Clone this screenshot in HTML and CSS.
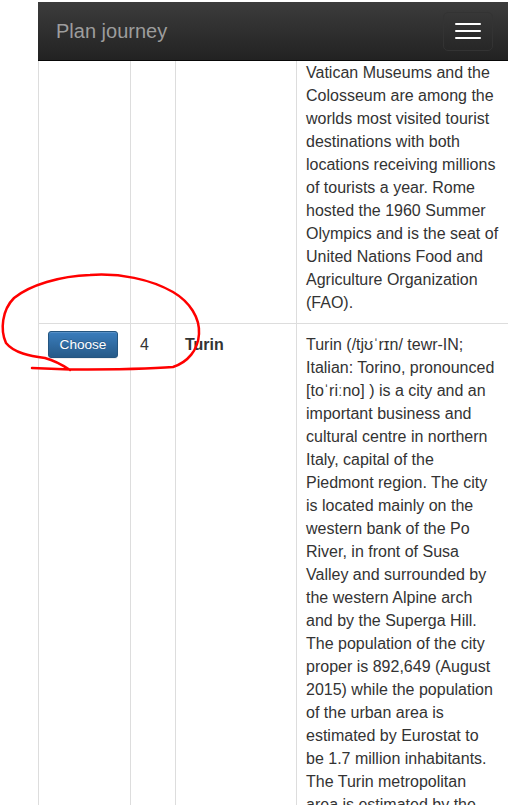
FILE: index.html
```html
<!DOCTYPE html>
<html lang="en">
<head>
<meta charset="utf-8">
<title>Plan journey</title>
<link rel="stylesheet" href="styles.css">
</head>
<body>
<div class="page">
  <nav class="navbar">
    <span class="brand">Plan journey</span>
    <button class="toggle" type="button" aria-label="Toggle navigation">
      <span class="bar"></span>
      <span class="bar"></span>
      <span class="bar"></span>
    </button>
  </nav>
  <main class="content">
    <table class="table">
      <colgroup>
        <col class="col-action">
        <col class="col-num">
        <col class="col-name">
        <col class="col-desc">
      </colgroup>
      <tbody>
        <tr>
          <td></td>
          <td></td>
          <td></td>
          <td>Vatican Museums and the Colosseum are among the worlds most visited tourist destinations with both locations receiving millions of tourists a year. Rome hosted the 1960 Summer Olympics and is the seat of United Nations Food and Agriculture Organization (FAO).</td>
        </tr>
        <tr>
          <td><button class="btn-choose" type="button">Choose</button></td>
          <td>4</td>
          <td class="name">Turin</td>
          <td>Turin (/tjʊˈrɪn/ tewr-IN; Italian: Torino, pronounced [toˈriːno] ) is a city and an important business and cultural centre in northern Italy, capital of the Piedmont region. The city is located mainly on the western bank of the Po River, in front of Susa Valley and surrounded by the western Alpine arch and by the Superga Hill. The population of the city proper is 892,649 (August 2015) while the population of the urban area is estimated by Eurostat to be 1.7 million inhabitants. The Turin metropolitan area is estimated by the OECD to have a population of 2.2 million.</td>
        </tr>
      </tbody>
    </table>
  </main>
  <svg class="annotation" width="508" height="805" viewBox="0 0 508 805" aria-hidden="true">
    <path d="M32,368 L70,369.5 C110,369.5 150,369 173,367 C188,362 198,350 199,334 C200,318 190,302 173,292 C150,279 120,273 90,275 C60,276 30,285 14,298 C2,310 0,330 6,343 C14,353 30,356 45,358 C56,361 64,366 70,370" fill="none" stroke="#ff0000" stroke-width="2.5" stroke-linecap="round" stroke-linejoin="round"/>
  </svg>
</div>
</body>
</html>
```

FILE: styles.css
```css
* {
  box-sizing: border-box;
}

html, body {
  margin: 0;
  background: #fff;
}

body {
  font-family: "Liberation Sans", Arial, sans-serif;
  color: #333;
}

.page {
  position: relative;
  padding-left: 38px;
  padding-top: 51px;
  min-height: 805px;
}

.navbar {
  position: fixed;
  top: 2px;
  left: 38px;
  right: 0;
  height: 59px;
  display: flex;
  align-items: center;
  justify-content: space-between;
  background: linear-gradient(to bottom, #3c3c3c 0%, #222 100%);
  border-bottom: 1px solid #080808;
  z-index: 10;
}

.brand {
  padding-left: 18px;
  font-size: 20px;
  line-height: 20px;
  color: #9d9d9d;
}

.toggle {
  margin-right: 15px;
  width: 50px;
  height: 39px;
  padding: 0;
  border: 1px solid #333;
  border-radius: 5px;
  background: transparent;
  display: flex;
  flex-direction: column;
  align-items: center;
  justify-content: center;
  gap: 5px;
}

.bar {
  display: block;
  width: 26px;
  height: 2px;
  border-radius: 1px;
  background: #fff;
}

.table {
  width: 470px;
  border-collapse: collapse;
  table-layout: fixed;
  font-size: 16px;
  line-height: 23px;
}

.col-action { width: 92px; }
.col-num { width: 45px; }
.col-name { width: 121px; }
.col-desc { width: 212px; }

.table td {
  border: 1px solid #ddd;
  padding: 9px;
  vertical-align: top;
}

.table td:last-child {
  border-right: 0;
}

.name {
  font-weight: bold;
}

.btn-choose {
  display: block;
  margin-top: -2px;
  width: 70px;
  height: 27px;
  padding: 0;
  font-family: "Liberation Sans", Arial, sans-serif;
  font-size: 13.6px;
  line-height: 25px;
  color: #fff;
  text-shadow: 0 -1px 0 rgba(0, 0, 0, 0.2);
  background: linear-gradient(to bottom, #3a7dbd 0%, #265a88 100%);
  border: 1px solid #245580;
  border-radius: 3px;
  box-shadow: inset 0 1px 0 rgba(255, 255, 255, 0.15), 0 1px 1px rgba(0, 0, 0, 0.075);
}

.annotation {
  position: absolute;
  top: 0;
  left: 0;
  pointer-events: none;
  z-index: 20;
}
```
